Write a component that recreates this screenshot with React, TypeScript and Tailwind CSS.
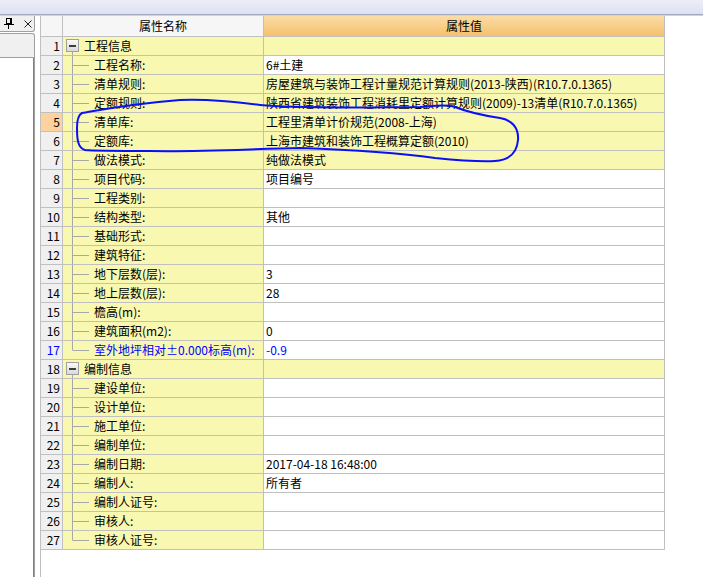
import React from 'react';

type Row = {
  n: number;
  label: string;
  value?: string;
  group?: boolean;
  last?: boolean;
  yellow?: boolean;
  blue?: boolean;
};

const rows: Row[] = [
  { n: 1, label: '工程信息', group: true, yellow: true },
  { n: 2, label: '工程名称:', value: '6#土建' },
  { n: 3, label: '清单规则:', value: '房屋建筑与装饰工程计量规范计算规则(2013-陕西)(R10.7.0.1365)', yellow: true },
  { n: 4, label: '定额规则:', value: '陕西省建筑装饰工程消耗里定额计算规则(2009)-13清单(R10.7.0.1365)', yellow: true },
  { n: 5, label: '清单库:', value: '工程里清单计价规范(2008-上海)', yellow: true },
  { n: 6, label: '定额库:', value: '上海市建筑和装饰工程概算定额(2010)', yellow: true },
  { n: 7, label: '做法模式:', value: '纯做法模式', yellow: true },
  { n: 8, label: '项目代码:', value: '项目编号' },
  { n: 9, label: '工程类别:' },
  { n: 10, label: '结构类型:', value: '其他' },
  { n: 11, label: '基础形式:' },
  { n: 12, label: '建筑特征:' },
  { n: 13, label: '地下层数(层):', value: '3' },
  { n: 14, label: '地上层数(层):', value: '28' },
  { n: 15, label: '檐高(m):' },
  { n: 16, label: '建筑面积(m2):', value: '0' },
  { n: 17, label: '室外地坪相对±0.000标高(m):', value: '-0.9', last: true, blue: true },
  { n: 18, label: '编制信息', group: true, yellow: true },
  { n: 19, label: '建设单位:' },
  { n: 20, label: '设计单位:' },
  { n: 21, label: '施工单位:' },
  { n: 22, label: '编制单位:' },
  { n: 23, label: '编制日期:', value: '2017-04-18 16:48:00' },
  { n: 24, label: '编制人:', value: '所有者' },
  { n: 25, label: '编制人证号:' },
  { n: 26, label: '审核人:' },
  { n: 27, label: '审核人证号:', last: true },
];

function TreeMark({ row }: { row: Row }) {
  if (row.group) {
    return (
      <svg width="20" height="18" className="shrink-0">
        <defs>
          <linearGradient id={`bx${row.n}`} x1="0" y1="0" x2="0" y2="1">
            <stop offset="0" stopColor="#fafafa" />
            <stop offset="1" stopColor="#d8d8d8" />
          </linearGradient>
        </defs>
        <line x1="8.5" y1="15" x2="8.5" y2="18" stroke="#a8a8a8" />
        <rect x="2.5" y="2.5" width="12" height="12" fill={`url(#bx${row.n})`} stroke="#a0a0a0" />
        <rect x="5" y="8" width="7" height="2" fill="#3c3c3c" />
      </svg>
    );
  }
  return (
    <svg width="30" height="18" className="shrink-0">
      <line x1="8.5" y1="0" x2="8.5" y2={row.last ? 9.5 : 18} stroke="#a8a8a8" />
      <line x1="9" y1="9.5" x2="25" y2="9.5" stroke="#a8a8a8" />
    </svg>
  );
}

function PropRow({ row }: { row: Row }) {
  const text = row.blue ? 'text-[#0000ff]' : 'text-black';
  return (
    <div className="flex h-[19px] border-b border-[#c0c0c0]">
      <div
        className={`flex w-[22px] shrink-0 items-center justify-end border-r border-[#c0c0c0] pr-[2px] ${
          row.n === 5 ? 'bg-[#fcd29e]' : 'bg-[#f0f0f0]'
        } ${text}`}
      >
        {row.n}
      </div>
      <div className={`flex w-[201px] shrink-0 items-center overflow-hidden whitespace-nowrap border-r border-[#c0c0c0] bg-[#f8f8b0] pl-[1px] ${text}`}>
        <TreeMark row={row} />
        <span>{row.label}</span>
      </div>
      <div
        className={`flex w-[401px] shrink-0 items-center overflow-hidden whitespace-nowrap border-r border-[#c0c0c0] pl-[2px] ${
          row.yellow ? 'bg-[#f8f8b0]' : 'bg-white'
        } ${text}`}
      >
        {row.value}
      </div>
    </div>
  );
}

function PinIcon() {
  return (
    <svg width="10" height="11" viewBox="0 0 10 11">
      <rect x="2.5" y="0.5" width="5" height="5" fill="none" stroke="#000" />
      <rect x="6" y="0" width="2" height="6" fill="#000" />
      <line x1="0" y1="6.5" x2="10" y2="6.5" stroke="#000" />
      <line x1="4.5" y1="6.5" x2="4.5" y2="11" stroke="#000" />
    </svg>
  );
}

function CloseIcon() {
  return (
    <svg width="8" height="8" viewBox="0 0 8 8">
      <path d="M0.5 0.5 L7.5 7.5 M7.5 0.5 L0.5 7.5" stroke="#222" strokeWidth="1" />
    </svg>
  );
}

function LeftPanel() {
  return (
    <div className="flex w-[35px] shrink-0 flex-col">
      <div className="flex h-[16px] items-center gap-[10px] rounded-br-[3px] border-b border-r border-[#a0a0a0] bg-[#f0f0f0] pl-[4px]">
        <PinIcon />
        <CloseIcon />
      </div>
      <div className="mt-[1px] flex flex-1 flex-col rounded-tr-[3px] border-r border-t border-[#a0a0a0] bg-[#f0f0f0]">
        <div className="h-[24px] border-b border-[#a0a0a0]" />
        <div className="flex-1 border-r border-[#808080] bg-white" />
      </div>
    </div>
  );
}

export default function App() {
  return (
    <div
      className="relative h-[577px] w-[703px] overflow-hidden bg-white text-[12px] leading-none"
      style={{ fontFamily: '"Noto Sans CJK SC", "Noto Sans", sans-serif' }}
    >
      <div className="h-[15px] border-b border-[#a4a8bc] bg-gradient-to-b from-[#eceef8] to-[#dde1f3]" />
      <div className="h-px bg-[#d2d2da]" />
      <div className="flex h-[561px]">
        <LeftPanel />
        <div className="w-[5px] shrink-0 bg-white" />
        <div className="flex-1 border-l border-[#c0c0c0]">
          <div className="flex h-[21px] w-[624px] border-b border-[#c0c0c0]">
            <div className="w-[22px] shrink-0 border-r border-[#c0c0c0] bg-[#f6f6f6]" />
            <div className="flex w-[201px] shrink-0 items-center justify-center border-r border-[#c0c0c0] bg-[#f6f6f6]">
              属性名称
            </div>
            <div className="flex w-[401px] shrink-0 items-center justify-center border-r border-[#c0c0c0] bg-gradient-to-b from-[#fbdca6] to-[#f5c06c]">
              属性值
            </div>
          </div>
          <div className="w-[624px]">
            {rows.map((r) => (
              <PropRow key={r.n} row={r} />
            ))}
          </div>
        </div>
      </div>
      <svg className="pointer-events-none absolute left-0 top-0" width="703" height="577">
        <path
          d="M82 113 C100 110, 130 104, 180 100 C210 99, 235 102, 260 105 C300 109, 380 107, 420 107 C435 106, 445 104, 455 107 C465 111, 480 115, 500 118 C512 120, 519 128, 518 140 C517 152, 510 160, 495 161 C475 162, 455 160, 435 158 C400 153, 360 150, 300 148 C250 149, 200 152, 150 151 C120 151, 95 151, 85 150 C78 148, 77 140, 77 128 C77 120, 78 115, 82 113 Z"
          fill="none"
          stroke="#0a10f5"
          strokeWidth="2"
          strokeLinejoin="round"
        />
      </svg>
    </div>
  );
}
